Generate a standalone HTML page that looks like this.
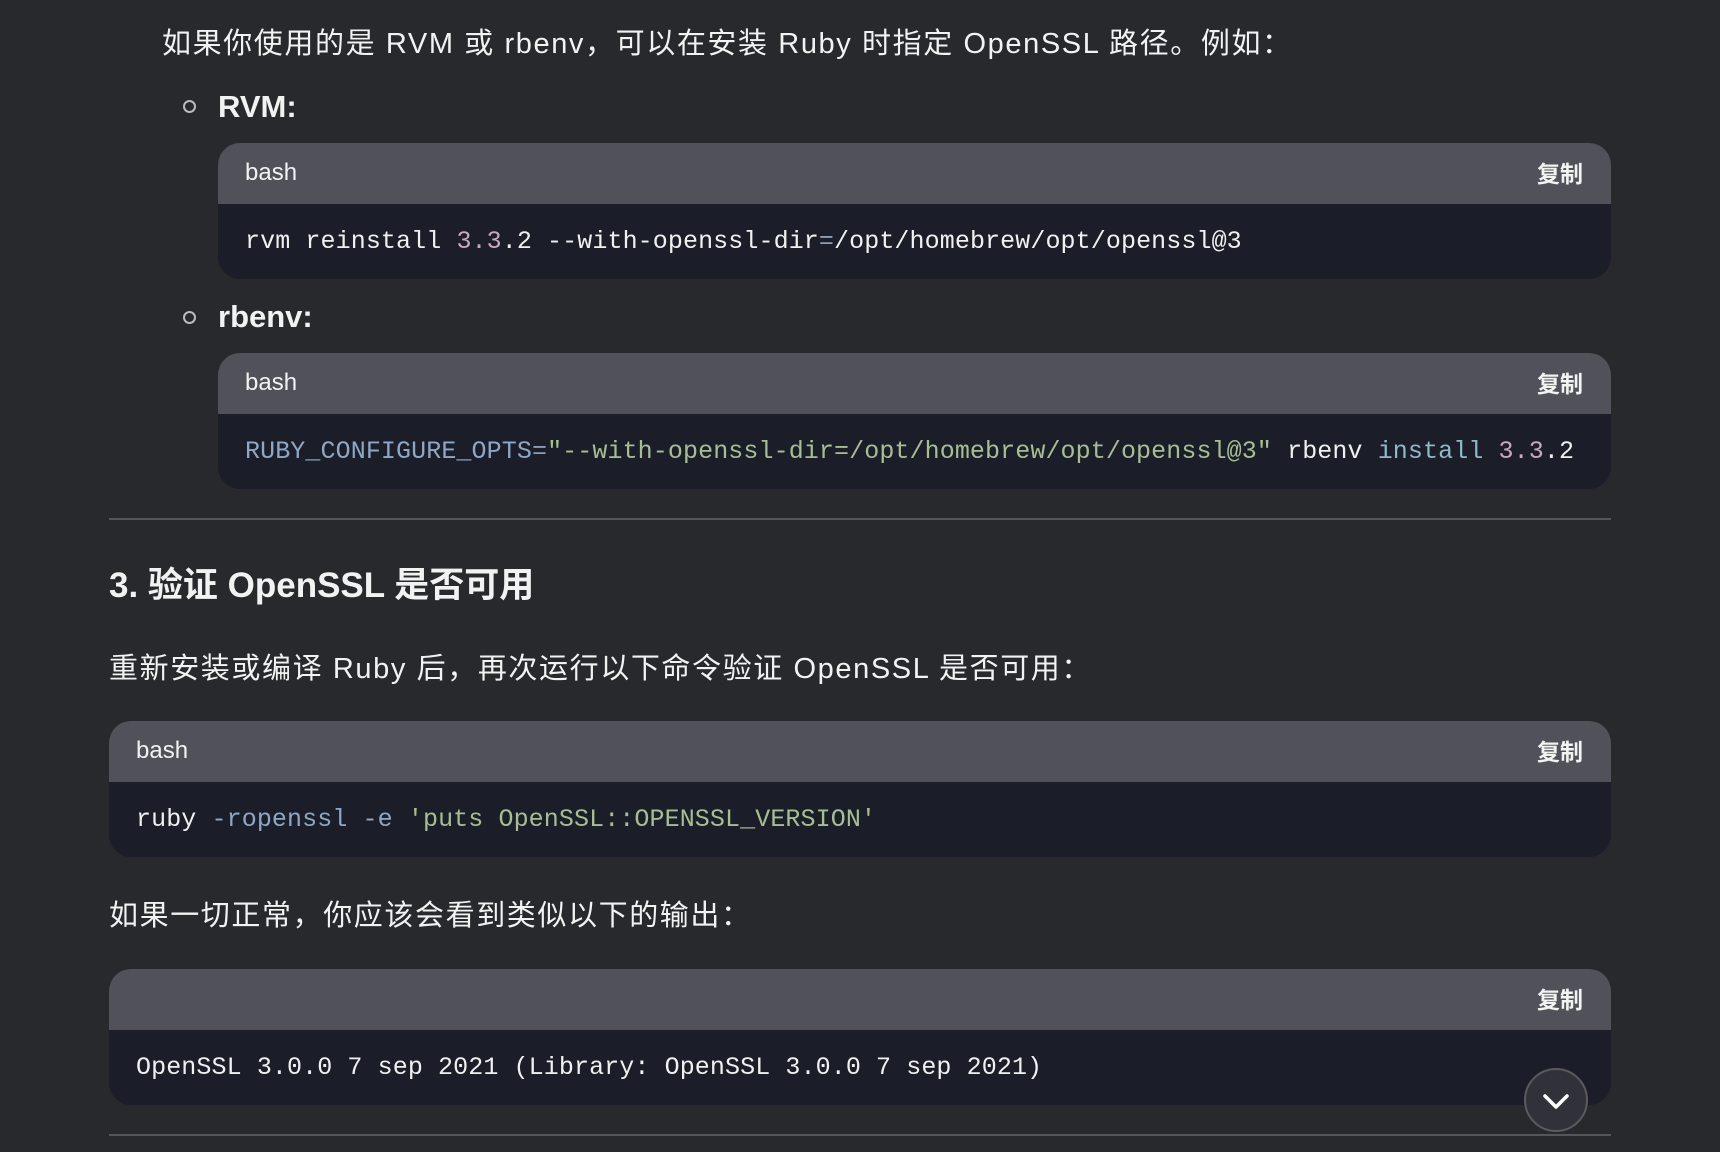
<!DOCTYPE html>
<html><head><meta charset="utf-8"><style>
body{margin:0;width:1720px;height:1152px;background:#28292d;overflow:hidden;position:relative;font-family:"Liberation Sans","Noto Sans CJK SC",sans-serif;color:#f2f2f2}
.a{position:absolute;white-space:nowrap}
.p{font-size:29px;line-height:36px;letter-spacing:1.6px}
.blk{position:absolute;background:#1b1e28;border-radius:22px;overflow:hidden}
.hd{background:#51515a;height:61px;position:relative}
.hd .l{position:absolute;left:27px;top:16px;font-size:24px;color:#f2f2f2}
.hd .c{position:absolute;right:28px;top:12px;font-size:23px;font-weight:bold;color:#f2f2f2}
.code{position:absolute;left:27px;font-family:"Liberation Mono",monospace;font-size:25px;letter-spacing:0.1px;color:#f0f0f0;white-space:pre}
.n{color:#c9a7c0}.g{color:#8d9db5}.v{color:#8fa7c6}.s{color:#a9bd94}.k{color:#8fb8c8}
.bul{position:absolute;width:9px;height:9px;border:2px solid #bbb;border-radius:50%}
.hr{position:absolute;left:109px;width:1502px;height:2px;background:#55565b}
</style></head><body>
<div class="a p" style="left:162px;top:26px">如果你使用的是 RVM 或 rbenv，可以在安装 Ruby 时指定 OpenSSL 路径。例如：</div>
<div class="bul" style="left:183px;top:100px"></div>
<div class="a" style="left:218px;top:89px;font-size:31px;font-weight:bold">RVM:</div>
<div class="blk" style="left:218px;top:143px;width:1393px;height:136px">
<div class="hd"><span class="l">bash</span><span class="c">复制</span></div>
<div class="code" style="top:84px">rvm reinstall <span class="n">3.3</span>.2 --with-openssl-dir<span class="g">=</span>/opt/homebrew/opt/openssl@3</div>
</div>
<div class="bul" style="left:183px;top:311px"></div>
<div class="a" style="left:218px;top:299px;font-size:31px;font-weight:bold">rbenv:</div>
<div class="blk" style="left:218px;top:353px;width:1393px;height:136px">
<div class="hd"><span class="l">bash</span><span class="c">复制</span></div>
<div class="code" style="top:84px"><span class="v">RUBY_CONFIGURE_OPTS</span><span class="g">=</span><span class="s">"--with-openssl-dir=/opt/homebrew/opt/openssl@3"</span> rbenv <span class="k">install</span> <span class="n">3.3</span>.2</div>
</div>
<div class="hr" style="top:518px"></div>
<div class="a" style="left:109px;top:557px;font-size:35px;font-weight:bold">3. 验证 OpenSSL 是否可用</div>
<div class="a p" style="left:109px;top:651px">重新安装或编译 Ruby 后，再次运行以下命令验证 OpenSSL 是否可用：</div>
<div class="blk" style="left:109px;top:721px;width:1502px;height:136px">
<div class="hd"><span class="l">bash</span><span class="c">复制</span></div>
<div class="code" style="top:84px">ruby <span class="v">-ropenssl -e</span> <span class="s">'puts OpenSSL::OPENSSL_VERSION'</span></div>
</div>
<div class="a p" style="left:109px;top:898px">如果一切正常，你应该会看到类似以下的输出：</div>
<div class="blk" style="left:109px;top:969px;width:1502px;height:136px">
<div class="hd"><span class="c">复制</span></div>
<div class="code" style="top:84px">OpenSSL 3.0.0 7 sep 2021 (Library: OpenSSL 3.0.0 7 sep 2021)</div>
</div>
<div class="hr" style="top:1134px"></div>
<div style="position:absolute;left:1524px;top:1068px;width:60px;height:60px;border-radius:50%;background:#31313a;border:2px solid #5a5a5f">
<svg width="60" height="60" viewBox="0 0 60 60" style="position:absolute;left:0;top:0"><path d="M19 26 L30 37 L41 26" fill="none" stroke="#fff" stroke-width="3.5" stroke-linecap="round" stroke-linejoin="round"/></svg>
</div>
</body></html>
